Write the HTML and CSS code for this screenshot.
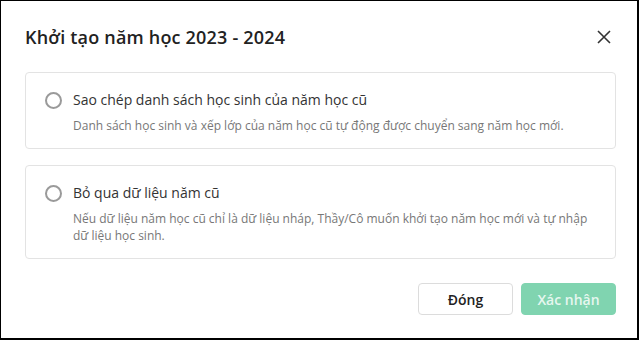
FILE: index.html
```html
<!DOCTYPE html>
<html lang="vi">
<head>
<meta charset="UTF-8" />
<meta name="viewport" content="width=device-width, initial-scale=1" />
<title>Khởi tạo năm học</title>
<link rel="stylesheet" href="styles.css">
</head>
<body>
  <div class="dialog">
    <div class="dialog-header">
      <h1 class="dialog-title">Khởi tạo năm học 2023 - 2024</h1>
      <button class="close-btn" aria-label="Đóng">
        <svg width="14" height="14" viewBox="0 0 14 14">
          <path d="M1 1 L13 13 M13 1 L1 13" stroke="#333" stroke-width="1.6" fill="none" />
        </svg>
      </button>
    </div>

    <div class="options">
      <label class="option">
        <span class="radio"></span>
        <span class="option-body">
          <span class="option-title">Sao chép danh sách học sinh của năm học cũ</span>
          <span class="option-desc">Danh sách học sinh và xếp lớp của năm học cũ tự động được chuyển sang năm học mới.</span>
        </span>
      </label>
      <label class="option">
        <span class="radio"></span>
        <span class="option-body">
          <span class="option-title">Bỏ qua dữ liệu năm cũ</span>
          <span class="option-desc">Nếu dữ liệu năm học cũ chỉ là dữ liệu nháp, Thầy/Cô muốn khởi tạo năm học mới và tự nhập dữ liệu học sinh.</span>
        </span>
      </label>
    </div>

    <div class="dialog-footer">
      <button class="btn btn-default">Đóng</button>
      <button class="btn btn-primary" disabled>Xác nhận</button>
    </div>
  </div>
</body>
</html>
```

FILE: styles.css
```css
html, body {
  margin: 0;
  height: 100%;
}
body {
  background-color: #000;
  font-family: 'Open Sans', 'Noto Sans', sans-serif;
  padding: 1px 2px 2px 1px;
  box-sizing: border-box;
}
.dialog {
  background-color: #fff;
  height: 100%;
  box-sizing: border-box;
  padding: 0 21px 0 24px;
  display: flex;
  flex-direction: column;
}
.dialog-header {
  display: flex;
  align-items: center;
  justify-content: space-between;
  padding-top: 24px;
  height: 24px;
}
.dialog-title {
  margin: 0;
  font-size: 18px;
  font-weight: 600;
  line-height: 24px;
  letter-spacing: 0.2px;
  color: #222;
}
.close-btn {
  background: none;
  border: none;
  padding: 0;
  width: 14px;
  height: 14px;
  margin-right: 5px;
  cursor: pointer;
  display: flex;
}
.options {
  margin-top: 23px;
  display: flex;
  flex-direction: column;
  gap: 16px;
}
.option {
  display: flex;
  align-items: flex-start;
  gap: 11px;
  border: 1px solid #e3e3e3;
  border-radius: 4px;
  padding: 17px 20px 14px 19px;
  cursor: pointer;
}
.radio {
  flex: none;
  width: 17px;
  height: 17px;
  border: 2px solid #9a9a9a;
  border-radius: 50%;
  box-sizing: border-box;
  margin-top: 2px;
}
.option-body {
  display: flex;
  flex-direction: column;
  gap: 7px;
}
.option-title {
  font-size: 14px;
  line-height: 20px;
  color: #333;
}
.option-desc {
  font-size: 12px;
  line-height: 17px;
  color: #777;
}
.dialog-footer {
  margin-top: 24px;
  display: flex;
  justify-content: flex-end;
  gap: 8px;
}
.btn {
  width: 95px;
  height: 32px;
  border-radius: 4px;
  font-family: inherit;
  font-size: 14px;
  font-weight: 600;
  cursor: pointer;
}
.btn-default {
  background-color: #fff;
  border: 1px solid #dcdcdc;
  color: #222;
}
.btn-primary {
  background-color: #80d4b0;
  border: 1px solid #80d4b0;
  color: #e6f7ef;
}
.btn-primary:disabled {
  cursor: not-allowed;
}
```
